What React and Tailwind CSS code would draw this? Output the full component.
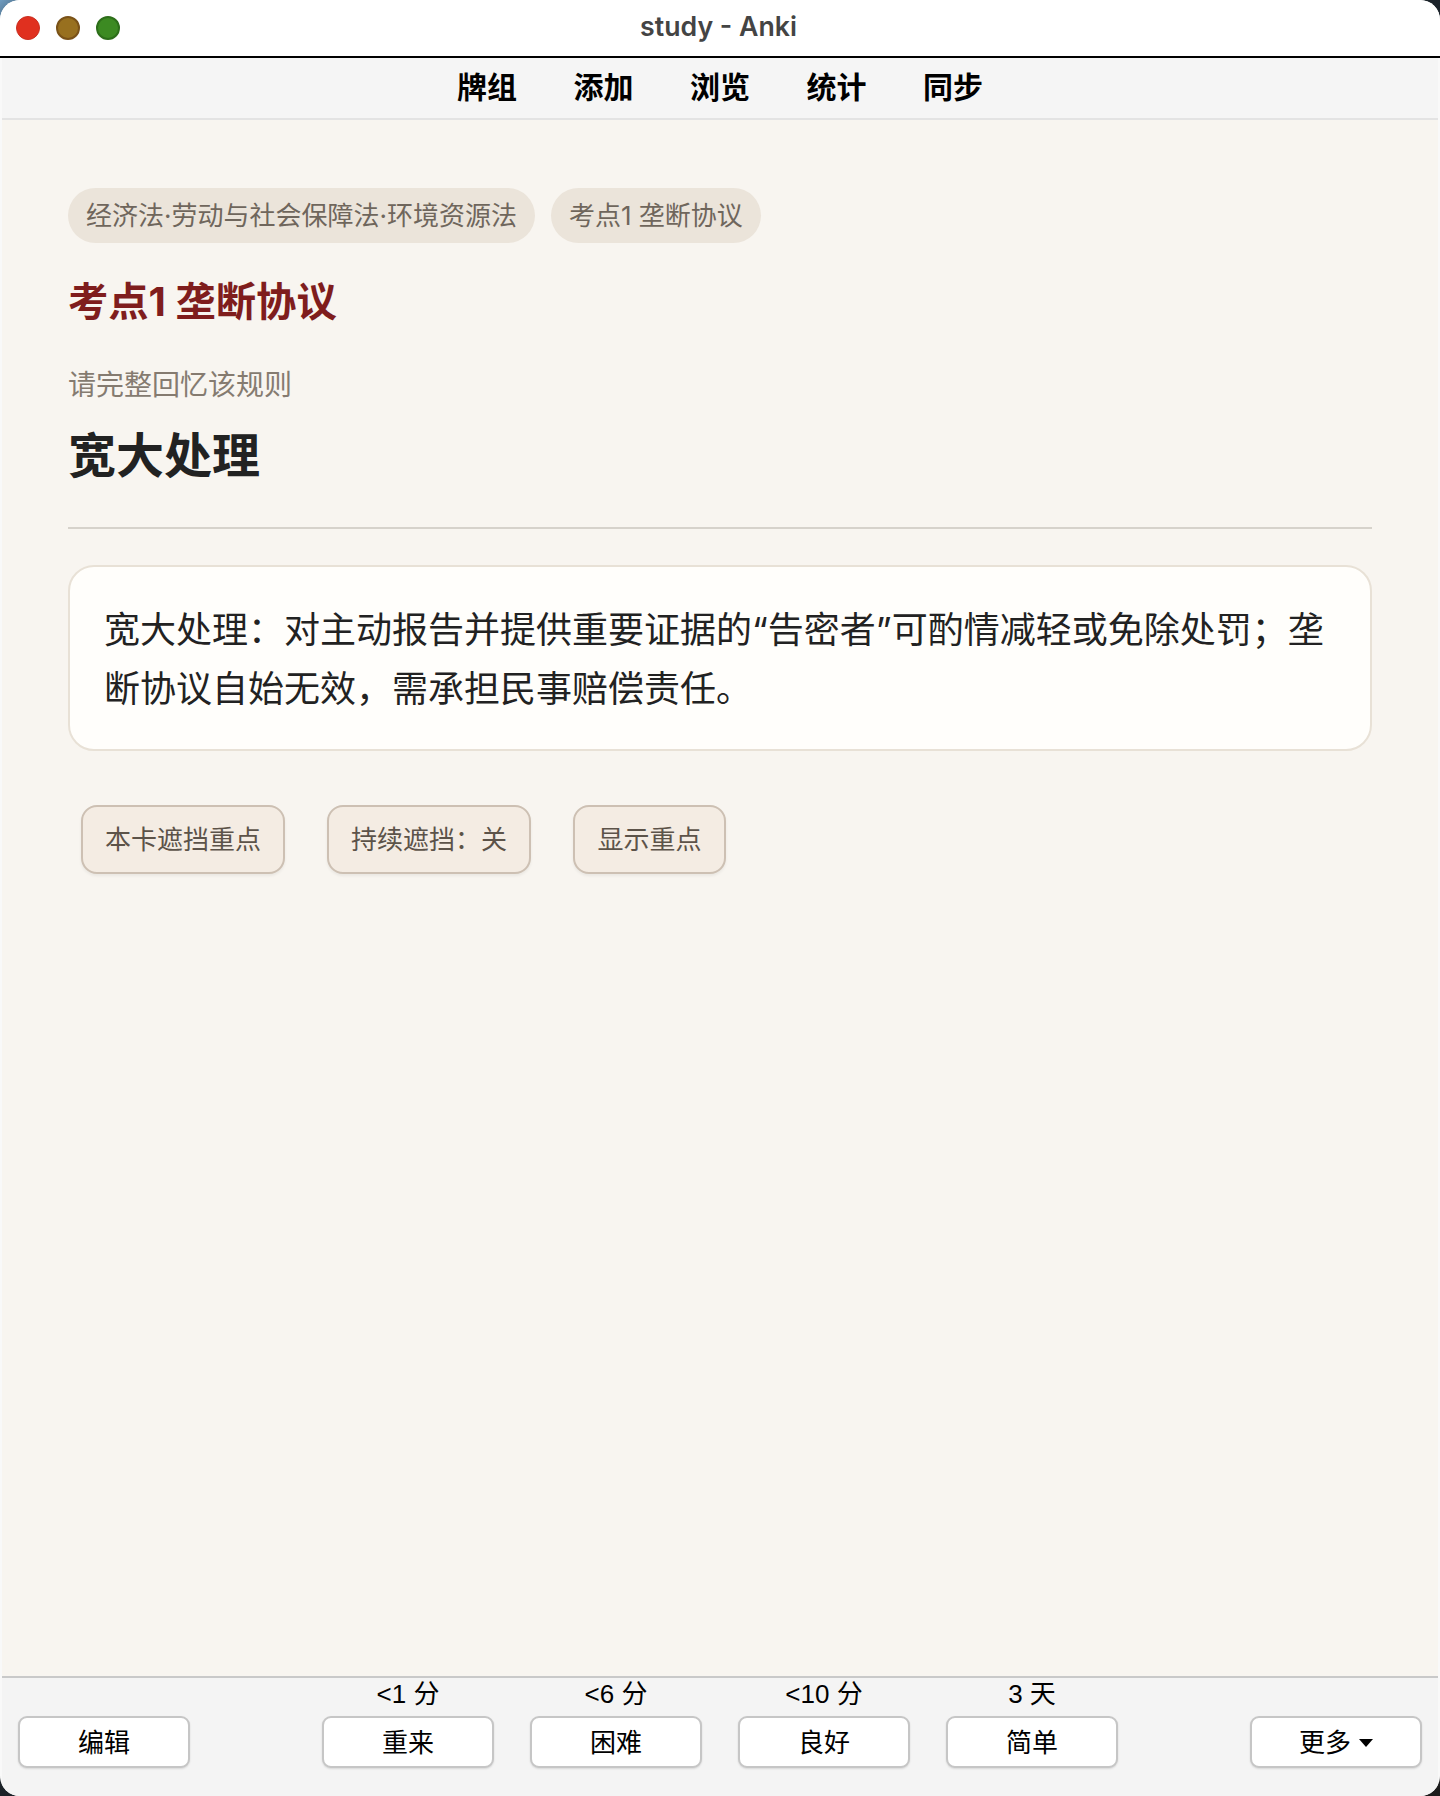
const cjk = "font-['Inter','Noto_Sans_CJK_SC',sans-serif]";
const barFont = "font-['Liberation_Sans','Noto_Sans_CJK_SC',sans-serif]";
const barBtn = "w-[172px] h-[52px] pt-[2px] bg-white border-2 border-[#c6c6c6] rounded-[9px] text-[26px] text-black shadow-[0_1px_2px_rgba(0,0,0,0.12)]";

const AnswerBtn = ({ label, time }) => (
  <div className="flex flex-col items-center w-[172px]">
    <span className="h-[32px] mb-[6px] text-[26px] leading-[32px] text-black">{time}</span>
    <button className={barBtn}>{label}</button>
  </div>
);

const Chip = ({ children }) => (
  <span className="h-[55px] px-[18px] flex items-center rounded-full bg-[#ebe4da] text-[26px] text-[#6f665c]">
    {children}
  </span>
);

const MaskBtn = ({ children, w }) => (
  <button className={`h-[69px] ${w} rounded-[16px] bg-[#f4ece3] border-2 border-[#cdc0b3] text-[26px] text-[#5c5349] shadow-[0_2px_3px_rgba(0,0,0,0.06)]`}>
    {children}
  </button>
);

export default function App() {
  return (
    <div className="w-[1440px] h-[1796px] bg-[linear-gradient(135deg,#6f9cc0_0%,#1c2a36_2%,#1c1c1c_100%)]">
      <div className={`w-full h-full flex flex-col overflow-hidden rounded-[20px] bg-[#f9f9f9] px-[2px] ${cjk}`}>
        <div className="h-[58px] shrink-0 flex items-center relative border-b-2 border-black bg-white -mx-[2px] px-[2px]">
          <div className="flex gap-[16px] pl-[14px]">
            <span className="w-[24px] h-[24px] rounded-full bg-[#e0301f] border border-[#c92f20]" />
            <span className="w-[24px] h-[24px] rounded-full bg-[#98701f] border-2 border-[#7a5218]" />
            <span className="w-[24px] h-[24px] rounded-full bg-[#3c8a22] border-2 border-[#2d6e1a]" />
          </div>
          <span className="absolute inset-x-0 -ml-[3px] -mt-[3px] text-center text-[26.7px] font-semibold text-[#444]">study - Anki</span>
        </div>
        <div className="h-[62px] shrink-0 flex items-center justify-center gap-[56.5px] pb-[2px] bg-[#f5f5f5] border-b-2 border-[#e3e3e3]">
          {["牌组", "添加", "浏览", "统计", "同步"].map((t) => (
            <span key={t} className="text-[30px] font-bold text-black">{t}</span>
          ))}
        </div>
        <div className="flex-1 px-[66px] pt-[68px] bg-[#f8f5f0]">
          <div className="flex gap-[16px]">
            <Chip>经济法·劳动与社会保障法·环境资源法</Chip>
            <Chip>考点1 垄断协议</Chip>
          </div>
          <h2 className="mt-[34px] text-[40.3px] leading-[50px] font-bold text-[#7f1d1d]">考点1 垄断协议</h2>
          <p className="mt-[38px] text-[28px] leading-[40px] text-[#857b70]">请完整回忆该规则</p>
          <h1 className="mt-[19px] text-[48px] leading-[64px] font-bold text-[#222]">宽大处理</h1>
          <div className="mt-[39px] border-t-2 border-[#d6d2cb]" />
          <div className="mt-[36px] h-[186px] bg-[#fffefb] border-2 border-[#e8e1d6] rounded-[26px] pl-[34px] pr-[35px] pt-[34px] text-[36px] leading-[59px] text-[#222]">
            宽大处理：对主动报告并提供重要证据的“告密者”可酌情减轻或免除处罚；垄断协议自始无效，需承担民事赔偿责任。
          </div>
          <div className="mt-[54px] ml-[13px] flex gap-[42px]">
            <MaskBtn w="w-[204px]">本卡遮挡重点</MaskBtn>
            <MaskBtn w="w-[204px]">持续遮挡：关</MaskBtn>
            <MaskBtn w="w-[153px]">显示重点</MaskBtn>
          </div>
        </div>
        <div className={`h-[120px] shrink-0 flex bg-[#f4f4f4] border-t-2 border-[#c9c9c9] px-[16px] ${barFont}`}>
          <div className="pt-[38px]">
            <button className={barBtn}>编辑</button>
          </div>
          <div className="flex-1 flex justify-center gap-[36px]">
            <AnswerBtn time="<1 分" label="重来" />
            <AnswerBtn time="<6 分" label="困难" />
            <AnswerBtn time="<10 分" label="良好" />
            <AnswerBtn time="3 天" label="简单" />
          </div>
          <div className="pt-[38px]">
            <button className={`${barBtn} flex items-center justify-center gap-[8px]`}>
              更多
              <span className="w-0 h-0 border-x-[7px] border-x-transparent border-t-[8px] border-t-black" />
            </button>
          </div>
        </div>
      </div>
    </div>
  );
}
